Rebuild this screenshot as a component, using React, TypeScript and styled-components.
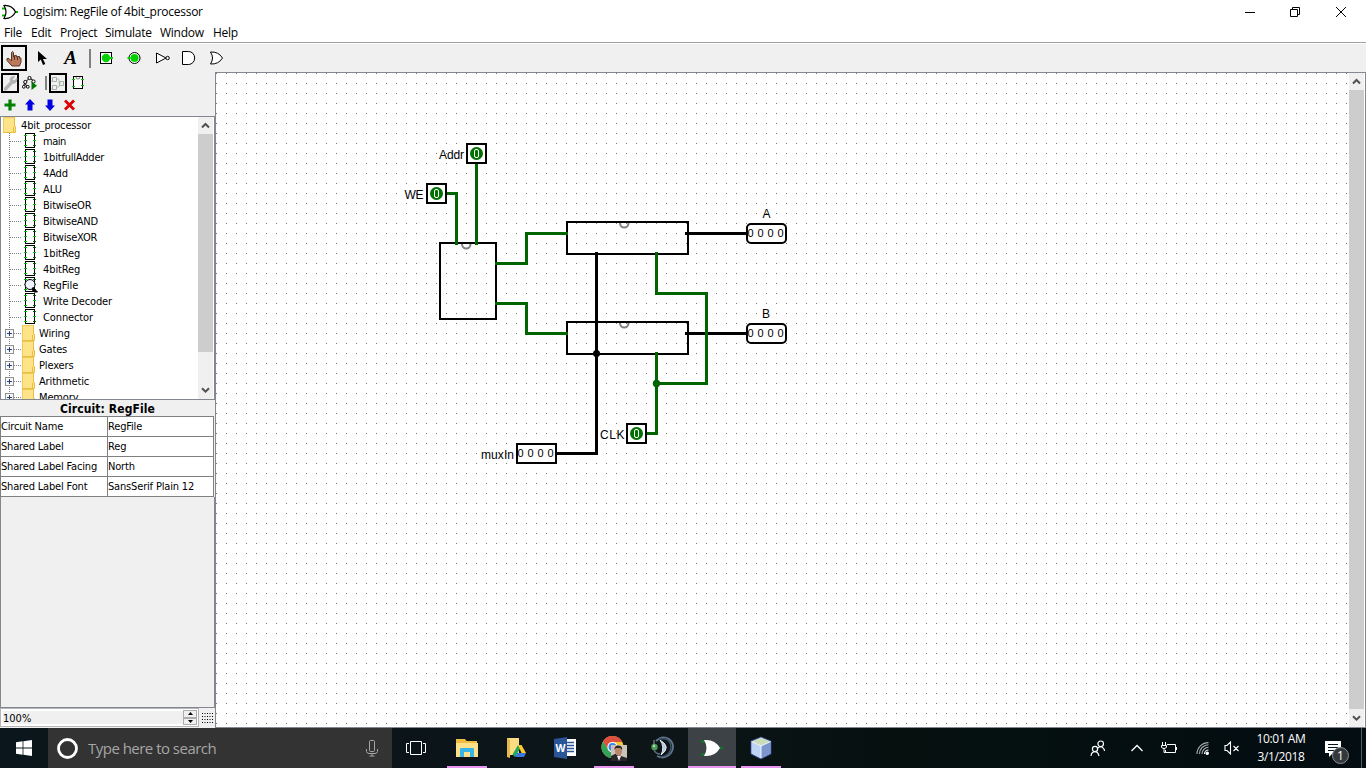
import React from "react";
import styled, { createGlobalStyle } from "styled-components";

const GlobalStyle = createGlobalStyle`
  * { box-sizing: border-box; }
  body { margin: 0; overflow: hidden; background: #fff; }
  svg { display: block; flex: none; }
`;

const ui = `"Open Sans", "Noto Sans", sans-serif`;
const tahoma = `"DejaVu Sans Condensed", "DejaVu Sans", sans-serif`;
const edge = "#828790";

const Desktop = styled.div`
  width: 1366px;
  height: 768px;
  display: flex;
  flex-direction: column;
  background: #fff;
  color: #000;
`;

const TitleBar = styled.header`
  height: 23px;
  flex: none;
  display: flex;
  align-items: center;
  padding: 0 2px;
  font: 12px/23px ${ui};
`;
const TitleText = styled.span`
  margin-left: 5px;
  flex: 1;
  letter-spacing: -0.26px;
`;
const WindowButton = styled.span<{ $w?: number }>`
  width: ${(p) => p.$w ?? 46}px;
  height: 20px;
  display: flex;
  justify-content: center;
  align-items: center;
`;

const MenuBar = styled.nav`
  height: 20px;
  flex: none;
  display: flex;
  padding-left: 4px;
  border-bottom: 1px solid #a0a0a0;
  font: 12px/20px ${ui};
  letter-spacing: -0.25px;
`;
const MenuItem = styled.span<{ $w: number }>`
  width: ${(p) => p.$w}px;
  white-space: nowrap;
`;

const ToolBar = styled.div`
  height: 29px;
  flex: none;
  display: flex;
  align-items: center;
  padding-left: 1px;
  border-top: 1px solid #fff;
  background: #f0f0f0;
`;
const Tool = styled.span<{ $w: number; $h: number; $active?: boolean; $gap?: number }>`
  width: ${(p) => p.$w}px;
  height: ${(p) => p.$h}px;
  margin-right: ${(p) => p.$gap ?? 2}px;
  border: 2px solid ${(p) => (p.$active ? "#000" : "transparent")};
  display: flex;
  align-items: center;
  justify-content: center;
  flex: none;
`;
const Divider = styled.span<{ $h: number; $left: number; $right: number }>`
  width: 2px;
  height: ${(p) => p.$h}px;
  margin: 0 ${(p) => p.$right}px 0 ${(p) => p.$left}px;
  background: #808080;
`;

const Workspace = styled.main`
  height: 656px;
  flex: none;
  display: flex;
`;
const SidePanel = styled.aside`
  width: 215px;
  display: flex;
  flex-direction: column;
  background: #f0f0f0;
  font-family: ${tahoma};
  font-size: 11px;
`;
const PanelTools = styled.div`
  height: 22px;
  display: flex;
  align-items: center;
  padding-left: 1px;
`;
const TreePane = styled.section`
  height: 284px;
  flex: none;
  display: flex;
  overflow: hidden;
  padding-right: 1px;
  border: 1px solid ${edge};
  background: #fff;
`;
const TreeList = styled.div`
  flex: 1;
  overflow: hidden;
`;
const TreeRow = styled.div<{ $indent?: number }>`
  height: 16px;
  padding-left: ${(p) => p.$indent ?? 0}px;
  display: flex;
  align-items: flex-start;
  white-space: nowrap;
`;
const TreeLabel = styled.span<{ $tracking: number }>`
  margin-left: 4px;
  line-height: 18px;
  height: 16px;
  letter-spacing: ${(p) => p.$tracking}px;
`;

const ScrollTrack = styled.div`
  width: 15px;
  flex: none;
  display: flex;
  flex-direction: column;
  background: #f0f0f0;
`;
const ScrollArrow = styled.span`
  height: 17px;
  display: flex;
  align-items: center;
  justify-content: center;
`;
const ScrollThumb = styled.span<{ $h: number }>`
  height: ${(p) => p.$h}px;
  margin-bottom: auto;
  background: #cdcdcd;
`;

const AttrTitle = styled.h2`
  margin: 0;
  height: 16px;
  flex: none;
  text-align: center;
  font: bold 12px/18px ${tahoma};
  letter-spacing: 0.1px;
`;
const AttrTable = styled.div`
  width: 214px;
  display: grid;
  grid-template-columns: 107px 106px;
  border-left: 1px solid #808080;
  border-top: 1px solid #808080;
`;
const AttrCell = styled.span`
  height: 20px;
  line-height: 20px;
  background: #fff;
  border-right: 1px solid #808080;
  border-bottom: 1px solid #808080;
  white-space: nowrap;
  letter-spacing: -0.17px;
`;
const AttrFiller = styled.div`
  flex: 1;
  border: 1px solid ${edge};
  border-top: 0;
`;
const ZoomBar = styled.div`
  height: 20px;
  flex: none;
  display: flex;
`;
const ZoomField = styled.span`
  width: 199px;
  height: 19px;
  display: flex;
  padding: 1px;
  border: 1px solid #b4b6ba;
  background: #fff;
`;
const ZoomValue = styled.span`
  flex: 1;
  margin: 1px 0 1px 1px;
  line-height: 15px;
  background: #f0f0f0;
`;
const Spinner = styled.span`
  width: 14px;
  display: grid;
  grid-template-rows: 1fr 1fr;
`;
const SpinButton = styled.span`
  display: flex;
  align-items: center;
  justify-content: center;
  background: #f0f0f0;
  border: 1px solid #adadad;
`;
const GridToggle = styled.span`
  flex: 1;
  display: flex;
  align-items: center;
  justify-content: center;
`;

const CanvasPane = styled.section`
  flex: 1;
  display: flex;
  border: 1px solid ${edge};
  background: #fff;
`;

const TaskBar = styled.footer`
  height: 40px;
  flex: none;
  display: flex;
  color: #fff;
  background: linear-gradient(90deg, #0a161b 0%, #0b1519 32%, #0d1517 50%, #05100f 66%, #030d12 100%);
`;
const StartButton = styled.span`
  width: 48px;
  display: flex;
  align-items: center;
  justify-content: center;
`;
const SearchBox = styled.div`
  width: 344px;
  display: flex;
  align-items: center;
  padding: 0 14px 0 8px;
  background: #333;
  color: #a6a6a6;
  font: 15px/40px ${ui};
`;
const SearchText = styled.span`
  flex: 1;
  margin-left: 9px;
  letter-spacing: -0.52px;
`;
const TaskButton = styled.span<{ $active?: boolean; $running?: boolean; $gap?: number }>`
  width: 48px;
  margin-right: ${(p) => p.$gap ?? 1}px;
  position: relative;
  display: flex;
  align-items: center;
  justify-content: center;
  background: ${(p) => (p.$active ? "#3c4245" : "transparent")};
  &::after {
    content: "";
    position: absolute;
    bottom: 0;
    left: ${(p) => (p.$active ? 0 : 4)}px;
    right: ${(p) => (p.$active ? 0 : 4)}px;
    height: 2px;
    background: ${(p) => (p.$running ? "#e795f0" : "transparent")};
  }
`;
const Tray = styled.div`
  margin-left: auto;
  display: flex;
  align-items: center;
`;
const TrayIcon = styled.span<{ $w: number; $gap?: number }>`
  width: ${(p) => p.$w}px;
  margin-right: ${(p) => p.$gap ?? 0}px;
  display: flex;
  justify-content: center;
`;
const Clock = styled.div`
  width: 64px;
  text-align: center;
  font: 12px/18px ${ui};
  letter-spacing: -0.4px;
  white-space: nowrap;
`;
const Notice = styled.span`
  position: relative;
  width: 37px;
  margin-left: 11px;
`;
const NoticeCount = styled.span`
  position: absolute;
  left: 8px;
  top: 7px;
  width: 17px;
  height: 17px;
  border: 1px solid #8c8f91;
  border-radius: 50%;
  background: #33383b;
  text-align: center;
  font: 12px/15px ${ui};
`;
const ShowDesktop = styled.span`
  width: 5px;
  height: 40px;
  border-left: 1px solid #555c60;
`;

const PokeIcon = () => (
  <svg width="16" height="17" viewBox="0 0 16 17">
    <path d="M5.500 9V2.500Q6.500 .5 7.500 2.500V7h1V5.500h2V7h1V6.500h2V8h1.500v4L13.500 16H6L1 10.500V8.500h2L5.500 11Z" fill="#bd7a5b" stroke="#59362a" />
    <path d="M8.500 7v3M11.500 7v3" stroke="#59362a" />
  </svg>
);
const ArrowIcon = () => (
  <svg width="11" height="16" viewBox="0 0 11 16">
    <path d="M1 1V12L3.800 9.500L6 15L8.300 14L6 9H10Z" />
  </svg>
);
const LetterA = styled.span`
  font: italic bold 19px/20px "Liberation Serif", serif;
  padding-left: 1px;
`;
const InputPinIcon = () => (
  <svg width="16" height="16" viewBox="0 0 16 16">
    <rect x="2.500" y="2.500" width="11" height="11" fill="#fff" stroke="#000" />
    <circle cx="8" cy="8" r="4.200" fill="#00d200" />
    <path d="M12 8h3" stroke="#00d200" strokeWidth="2" />
  </svg>
);
const OutputPinIcon = () => (
  <svg width="16" height="16" viewBox="0 0 16 16">
    <circle cx="8.500" cy="8" r="5.500" fill="#fff" stroke="#000" />
    <circle cx="8.500" cy="8" r="4" fill="#00d200" />
    <path d="M1.500 8h3" stroke="#00d200" strokeWidth="2" />
  </svg>
);
const NotIcon = () => (
  <svg width="16" height="16" viewBox="0 0 16 16">
    <path d="M2.500 3V13L12 8Z" fill="#fff" stroke="#000" />
    <circle cx="13.600" cy="8" r="1.700" fill="#fff" stroke="#000" />
  </svg>
);
const AndIcon = () => (
  <svg width="16" height="16" viewBox="0 0 16 16">
    <path d="M.5 1.500H6.500A6.200 6.500 0 0 1 6.500 14.500H.5Z" fill="#fff" stroke="#000" />
  </svg>
);
const OrIcon = () => (
  <svg width="16" height="16" viewBox="0 0 16 16">
    <path d="M.5 2Q8.500 1.500 12.500 8Q8.500 14.500 .5 14Q4.500 8 .5 2Z" fill="#fff" stroke="#000" />
  </svg>
);
const AppIcon = () => (
  <svg width="16" height="16" viewBox="0 0 16 16">
    <path d="M0 4.500h4M0 11.500h4M13 8h3" stroke="#00b400" strokeWidth="2" />
    <path d="M2 1.500Q10 1 13.500 8Q10 15 2 14.500Q6 8 2 1.500Z" fill="#fff" stroke="#000" strokeWidth="1.200" />
  </svg>
);
const WrenchIcon = () => (
  <svg width="15" height="16" viewBox="0 0 15 16">
    <path d="M2.500 14L9 7" stroke="#b4b4b4" strokeWidth="3.400" strokeLinecap="round" />
    <path d="M14 3.500L11 6L9.500 4.500L11.500 1.500Q7.500 1 7 4.500Q7 8.500 10.500 8.500Q14 8 14 3.500Z" fill="#b4b4b4" stroke="#b4b4b4" />
  </svg>
);
const SimTreeIcon = () => (
  <svg width="16" height="16" viewBox="0 0 16 16">
    <path d="M7.500 3L2.500 8L1.500 12M7.500 3L12 6M3 8L5 12" fill="none" stroke="#000" />
    <g fill="#fff" stroke="#000">
      <circle cx="7.500" cy="3" r="1.600" />
      <circle cx="3.300" cy="7" r="1.600" />
      <circle cx="1.800" cy="11.800" r="1.400" />
      <circle cx="5.800" cy="11.800" r="1.400" />
      <circle cx="11.500" cy="6.500" r="1.600" />
    </g>
    <path d="M9.500 6.500V15L15 10.700Z" fill="#007800" />
  </svg>
);
const LayoutIcon = () => (
  <svg width="14" height="15" viewBox="0 0 14 15" fill="none">
    <path d="M5 3h3v4h2M5 11h3V8.500M0 5h1M0 13h1" stroke="#a5d6a5" />
    <path d="M1.500 1.500h4v4h-4ZM1.500 9.500h4v4h-4ZM8.500 5.500h4v4h-4Z" stroke="#aaa" />
  </svg>
);
const AppearanceIcon = () => (
  <svg width="12" height="16" viewBox="0 0 12 16">
    <rect x="1.500" y="1.500" width="9" height="12" fill="#fff" stroke="#000" />
    <path d="M4 2a2 2 0 0 0 4 0" fill="none" stroke="#808080" />
    <path d="M0 4.500h3M0 11.500h3M9 10.500h3M9 4.500h3" stroke="#00c800" />
  </svg>
);

const RowTools = styled.span`
  display: flex;
  gap: 4px;
  padding-left: 1px;
`;
const AddIcon = () => (
  <svg width="16" height="16" viewBox="0 0 16 16">
    <path d="M8 2.500V13.500M2.500 8H13.500" stroke="#008000" strokeWidth="3.200" />
  </svg>
);
const MoveIcon = ({ down }: { down?: boolean }) => (
  <svg width="16" height="16" viewBox="0 0 16 16">
    <path d={down ? "M8 14L3 8.500H5.500V2.500H10.500V8.500H13Z" : "M8 2L3 7.500H5.500V13.500H10.500V7.500H13Z"} fill="#0000e0" />
  </svg>
);
const RemoveIcon = () => (
  <svg width="16" height="16" viewBox="0 0 16 16">
    <path d="M3 3.500L12 12.500M12 3.500L3 12.500" stroke="#dc0000" strokeWidth="2.800" />
  </svg>
);

const FolderArt = () => (
  <>
    <rect width="12" height="16" fill="#ffe389" />
    <path d="M0 .5H12M.5 0V16" stroke="#efca58" />
    <path d="M11.500 0V9.500H12.500V15.500H0M10.500 15V10" fill="none" stroke="#eabf3f" />
  </>
);
const RootFolder = () => (
  <svg width="14" height="16" viewBox="0 0 14 16">
    <FolderArt />
  </svg>
);

const CircuitBranch = ({ open }: { open?: boolean }) => (
  <svg width="38" height="16" viewBox="0 0 38 16">
    <path d="M8.500 0V16M9 8.500H20" stroke="#808080" strokeDasharray="1 1" />
    <rect x="24.500" y=".5" width="9" height="14" fill="#fff" stroke="#000" />
    <path d="M23 2.500h3M23 7.500h3M23 12.500h3M32 7.500h3" stroke="#00c800" />
    <path d="M32 2.500h3M32 12.500h3" stroke="#006400" />
    {open && (
      <>
        <circle cx="29" cy="7.500" r="5" fill="#f0f2ff" stroke="#000" />
        <path d="M32 10.500L36.500 15H33L31 12.500Z" stroke="#000" />
      </>
    )}
  </svg>
);
const LibraryBranch = () => (
  <svg width="34" height="16" viewBox="0 0 34 16">
    <path d="M8.500 0V16M13 8.500H20" stroke="#808080" strokeDasharray="1 1" />
    <rect x="4.500" y="4.500" width="8" height="8" fill="#f8f8f8" stroke="#919191" />
    <path d="M6 8.500h5M8.500 6v5" stroke="#29417b" />
    <g transform="translate(21 0)">
      <FolderArt />
    </g>
  </svg>
);

const Chevron = ({ down }: { down?: boolean }) => (
  <svg width="9" height="7" viewBox="0 0 9 7">
    <path d={down ? "M1 1.200L4.500 4.700L8 1.200" : "M1 5.500L4.500 2L8 5.500"} fill="none" stroke="#505050" strokeWidth="2" />
  </svg>
);

const Scrollbar = ({ thumb }: { thumb: number }) => (
  <ScrollTrack>
    <ScrollArrow><Chevron /></ScrollArrow>
    <ScrollThumb $h={thumb} />
    <ScrollArrow><Chevron down /></ScrollArrow>
  </ScrollTrack>
);

const circuits: [string, number][] = [
  ["main", -0.5],
  ["1bitfullAdder", -0.2],
  ["4Add", -0.15],
  ["ALU", 0],
  ["BitwiseOR", -0.2],
  ["BitwiseAND", -0.25],
  ["BitwiseXOR", -0.2],
  ["1bitReg", -0.1],
  ["4bitReg", -0.1],
  ["RegFile", 0],
  ["Write Decoder", -0.15],
  ["Connector", -0.12],
];
const libraries = ["Wiring", "Gates", "Plexers", "Arithmetic", "Memory"];
const attributes: [string, string][] = [
  ["Circuit Name", "RegFile"],
  ["Shared Label", "Reg"],
  ["Shared Label Facing", "North"],
  ["Shared Label Font", "SansSerif Plain 12"],
];

const WireLabel = styled.text`
  font: 12px "Liberation Sans", Arial, sans-serif;
`;
const Digit = styled.text`
  font: 11px "Liberation Sans", Arial, sans-serif;
  text-anchor: middle;
`;

const BitPin = ({ x, y }: { x: number; y: number }) => (
  <g>
    <rect x={x} y={y} width="19" height="19" fill="#fff" stroke="#000" strokeWidth="2" />
    <circle cx={x + 9.5} cy={y + 9.5} r="6.500" fill="#007000" />
    <rect x={x + 7.5} y={y + 5.5} width="4" height="8" rx="1.500" fill="none" stroke="#fff" />
  </g>
);
const BusPin = ({ x, y, rounded }: { x: number; y: number; rounded?: boolean }) => (
  <g>
    <rect x={x} y={y} width="39" height="19" rx={rounded ? 4 : 0} fill="#fff" stroke="#000" strokeWidth="2" />
    {[3.6, 13.6, 23.6, 33.6].map((dx) => (
      <Digit key={dx} x={x + dx} y={y + 13}>0</Digit>
    ))}
  </g>
);

const Circuit = () => (
  <svg width="1133" height="654" viewBox="216 73 1133 654">
    <defs>
      <pattern id="grid" x="6" y="3" width="10" height="10" patternUnits="userSpaceOnUse">
        <rect width="1" height="1" fill="#777" />
      </pattern>
    </defs>
    <rect x="216" y="73" width="1133" height="654" fill="url(#grid)" />
    <g fill="none" stroke="#808080" strokeWidth="2">
      <path d="M462 244a4.200 4.500 0 0 0 8.500 0" />
      <path d="M620 223a4.200 4.500 0 0 0 8.500 0" />
      <path d="M620 323a4.200 4.500 0 0 0 8.500 0" />
    </g>
    <g fill="none" stroke="#000" strokeWidth="2">
      <rect x="440" y="243" width="56" height="76" />
      <rect x="567" y="222" width="121" height="32" />
      <rect x="567" y="322" width="121" height="32" />
    </g>
    <g fill="none" stroke="#000" strokeWidth="3">
      <path d="M685 233.500H747M685 333.500H747" />
      <path d="M596.500 252V453.500H557" />
    </g>
    <g fill="none" stroke="#006400" strokeWidth="3">
      <path d="M476.500 162V245M446 193.500H456.500V245" />
      <path d="M495 263.500H526.500V233.500H568M495 303.500H526.500V333.500H568" />
      <path d="M656.500 252V293.500H706.500V383.500H656.500" />
      <path d="M656.500 352V433.500H646" />
    </g>
    <circle cx="596.500" cy="353.500" r="3.500" />
    <circle cx="656.500" cy="383.500" r="3.700" fill="#006400" />
    <BitPin x={467} y={144} />
    <BitPin x={427} y={184} />
    <BitPin x={627} y={424} />
    <BusPin x={747} y={224} rounded />
    <BusPin x={747} y={324} rounded />
    <BusPin x={517} y={444} />
    <WireLabel x="439" y="159" textLength="25">Addr</WireLabel>
    <WireLabel x="404.500" y="199" textLength="19">WE</WireLabel>
    <WireLabel x="600" y="439" textLength="24.500">CLK</WireLabel>
    <WireLabel x="481" y="459" textLength="33">muxIn</WireLabel>
    <WireLabel x="762.500" y="218">A</WireLabel>
    <WireLabel x="762" y="318">B</WireLabel>
  </svg>
);

const WindowsLogo = () => (
  <svg width="16" height="16" viewBox="0 0 16 16" fill="#fff">
    <path d="M0 2.200L6.600 1.300V7.500H0ZM7.400 1.200L16 0V7.500H7.400ZM0 8.400H6.600V14.700L0 13.800ZM7.400 8.400H16V16L7.400 14.800Z" />
  </svg>
);
const MicIcon = () => (
  <svg width="12" height="17" viewBox="0 0 12 17" fill="none" stroke="#a6a6a6">
    <rect x="3.500" y=".5" width="5" height="11" rx="1" />
    <path d="M.5 9V11.500Q1 13.500 3 13.500H9Q11 13.500 11.500 11.500V9M6 13.500V16M3.500 16H8.500" />
  </svg>
);
const TaskViewIcon = () => (
  <svg width="20" height="16" viewBox="0 0 20 16" fill="none" stroke="#fff">
    <path d="M4.500 1.500h11v13h-11ZM3 3.500H.5V12.500H3M17 3.500H19.500V12.500H17" />
  </svg>
);
const ExplorerIcon = () => (
  <svg width="22" height="20" viewBox="0 0 22 20">
    <path d="M0 1h9l1.500 2H21V19H0Z" fill="#f0bd42" />
    <path d="M0 5H22V19H0Z" fill="#fce08a" />
    <path d="M4 19V11Q4 10 5 10H17Q18 10 18 11V19H14V14H8V19Z" fill="#38b4e8" />
  </svg>
);
const DriveIcon = () => (
  <svg width="19" height="20" viewBox="0 0 19 20">
    <path d="M0 0H12V17H3L0 19Z" fill="#fbdc82" />
    <path d="M0 0L3 2V20L0 19Z" fill="#e8b84a" />
    <path d="M11 7L5.500 16.500L8 19L13.500 10Z" fill="#26a65b" />
    <path d="M11 7H14.500L19 15H14.500Z" fill="#fdc92f" />
    <path d="M8 19L10 15H19L17 19Z" fill="#3b79e0" />
  </svg>
);
const WordMark = styled.text`
  font: bold 11px ${ui};
  fill: #fff;
`;
const WordIcon = () => (
  <svg width="22" height="22" viewBox="0 0 22 22">
    <rect x="11" y="2" width="11" height="17" fill="#fff" />
    <path d="M13 5.500h7M13 8.500h7M13 11.500h7M13 14.500h7" stroke="#2a5699" strokeWidth="1.300" />
    <path d="M0 2L13 0V22L0 20Z" fill="#2a5699" />
    <WordMark x="1.500" y="15" textLength="10" lengthAdjust="spacingAndGlyphs">W</WordMark>
  </svg>
);
const ChromeIcon = () => (
  <svg width="26" height="26" viewBox="0 0 26 26">
    <circle cx="11.500" cy="12" r="11" fill="#f4c63a" />
    <path d="M2 6.500A11 11 0 0 1 21.300 7H11.500L7 14.500Z" fill="#dd4f3e" />
    <path d="M2 6.500L7.500 15L12.500 17L10.500 23A11 11 0 0 1 2 6.500Z" fill="#33a35c" />
    <circle cx="11.500" cy="12" r="5.200" fill="#fff" />
    <circle cx="11.500" cy="12" r="4" fill="#4285e8" />
    <rect x="10" y="10" width="16" height="16" fill="#cdc2b7" />
    <path d="M10 26V21L15 18.500L20 21L26 23V26Z" fill="#29252a" />
    <ellipse cx="17.500" cy="16" rx="3.500" ry="5" fill="#b8876f" />
    <path d="M13.500 15Q13 10.500 17.500 10.500Q22 11 21 15L19.500 13H15Z" fill="#302522" />
    <path d="M16 21L18 26L20 21Z" fill="#eee" />
  </svg>
);
const TeamSpeakIcon = () => (
  <svg width="24" height="24" viewBox="0 0 24 24" fill="none">
    <path d="M5 5Q11 -1 18 3Q25 9 20 17Q14 24 6 20" stroke="#60758b" strokeWidth="1.800" />
    <path d="M8 3Q20 1 20 12Q19 20 9 21" stroke="#3d5168" strokeWidth="1.500" />
    <path d="M9 4Q21 11 10 19Q14 11 9 4Z" fill="#b9cbdc" stroke="#dbe6ee" />
    <path d="M3 9V4M3 14Q5 18 9 18" stroke="#607080" strokeWidth="1.500" />
    <circle cx="3.500" cy="11" r="3.200" fill="#4c9a58" />
    <circle cx="3" cy="10" r="1.200" fill="#a9dda9" />
  </svg>
);
const GateTaskIcon = () => (
  <svg width="24" height="18" viewBox="0 0 24 18">
    <path d="M1 2.500H6M1 15.500H6M19 9H23" stroke="#008c20" strokeWidth="1.500" />
    <path d="M4 1Q15 0 20 9Q15 18 4 17Q9 9 4 1Z" fill="#fff" />
  </svg>
);
const CubeIcon = () => (
  <svg width="22" height="24" viewBox="0 0 22 24">
    <path d="M1 5L11 1L21 5V18L11 23L1 18Z" fill="#9fb8e5" stroke="#293f83" />
    <path d="M1.500 5.500L11 1.500L20.500 5.500L11 10Z" fill="#cbdcb9" />
    <path d="M1.500 6L11 10V22.500L1.500 17.500Z" fill="#bdd4f5" />
    <path d="M11 10L20.500 6V17.500L11 22.500Z" fill="#7d95cd" />
    <path d="M1.500 5.500L11 10L20.500 5.500M11 10V22" fill="none" stroke="#eef5ff" />
  </svg>
);

const PeopleIcon = () => (
  <svg width="16" height="17" viewBox="0 0 16 17" fill="none" stroke="#fff" strokeWidth="1.200">
    <circle cx="10.700" cy="3.800" r="2.800" />
    <path d="M8 8Q11 5.500 13 8Q14.500 9 14.500 11" />
    <circle cx="5" cy="9" r="2.600" />
    <path d="M1 16Q1.500 11.700 5 11.700Q8 11.700 9 16" />
  </svg>
);
const UpIcon = () => (
  <svg width="14" height="8" viewBox="0 0 14 8">
    <path d="M1.500 7L7 1.500L12.500 7" fill="none" stroke="#fff" strokeWidth="1.300" />
  </svg>
);
const BatteryIcon = () => (
  <svg width="16" height="12" viewBox="0 0 16 12" fill="none" stroke="#fff">
    <path d="M6 2.500H14.500V10.500H4.500V8M15.500 5V8" />
    <path d="M1.500 0V3M4.500 0V3M.5 3.500H5.500V5Q5 6.500 3 6.500Q1 6.500 .5 5ZM3 6.500V10.500H4.500" />
  </svg>
);
const WifiIcon = () => (
  <svg width="13" height="13" viewBox="0 0 13 13" fill="none" stroke="#fff" strokeWidth="1.100">
    <path d="M8.500 12A4 4 0 0 1 12.500 8" />
    <path d="M6 12A6.500 6.500 0 0 1 12.500 5.300M3.500 12A9 9 0 0 1 12.500 2.800M1 12A11.500 11.500 0 0 1 12.500 .6" stroke="#a7adb0" />
    <circle cx="11.200" cy="11.200" r="1.200" fill="#fff" />
  </svg>
);
const VolumeIcon = () => (
  <svg width="16" height="14" viewBox="0 0 16 14" fill="none" stroke="#fff" strokeWidth="1.100">
    <path d="M1 4.500H3L6.500 1V13L3 9.500H1ZM9.500 5L14.500 10M14.500 5L9.500 10" />
  </svg>
);
const MessageIcon = () => (
  <svg width="18" height="17" viewBox="0 0 18 17">
    <path d="M1 1H17V13H9L5 17V13H1Z" fill="#fff" />
    <path d="M4 4.500H14M4 7.500H14M4 10.500H11" stroke="#08141a" />
  </svg>
);

export default function App() {
  return (
    <Desktop>
      <GlobalStyle />
      <TitleBar>
        <AppIcon />
        <TitleText>Logisim: RegFile of 4bit_processor</TitleText>
        <WindowButton $w={44}>
          <svg width="10" height="10"><path d="M0 5.500H10" stroke="#000" /></svg>
        </WindowButton>
        <WindowButton>
          <svg width="10" height="10" fill="none" stroke="#000"><path d="M.5 2.500H7.500V9.500H.5ZM2.500 2V.5H9.500V7.500H8" /></svg>
        </WindowButton>
        <WindowButton>
          <svg width="10" height="10" stroke="#000"><path d="M0 0L10 10M10 0L0 10" /></svg>
        </WindowButton>
      </TitleBar>
      <MenuBar>
        <MenuItem $w={27}>File</MenuItem>
        <MenuItem $w={29}>Edit</MenuItem>
        <MenuItem $w={45}>Project</MenuItem>
        <MenuItem $w={55}>Simulate</MenuItem>
        <MenuItem $w={53}>Window</MenuItem>
        <MenuItem $w={30}>Help</MenuItem>
      </MenuBar>
      <ToolBar>
        <Tool $w={26} $h={26} $active><PokeIcon /></Tool>
        <Tool $w={26} $h={26}><ArrowIcon /></Tool>
        <Tool $w={26} $h={26}><LetterA>A</LetterA></Tool>
        <Divider $h={19} $left={4} $right={2} />
        <Tool $w={26} $h={26}><InputPinIcon /></Tool>
        <Tool $w={26} $h={26}><OutputPinIcon /></Tool>
        <Tool $w={26} $h={26}><NotIcon /></Tool>
        <Tool $w={26} $h={26}><AndIcon /></Tool>
        <Tool $w={26} $h={26}><OrIcon /></Tool>
      </ToolBar>
      <Workspace>
        <SidePanel>
          <PanelTools>
            <Tool $w={18} $h={20} $active><WrenchIcon /></Tool>
            <Tool $w={18} $h={20} $gap={0}><SimTreeIcon /></Tool>
            <Divider $h={14} $left={6} $right={2} />
            <Tool $w={18} $h={20} $active><LayoutIcon /></Tool>
            <Tool $w={18} $h={20}><AppearanceIcon /></Tool>
          </PanelTools>
          <PanelTools>
            <RowTools>
              <AddIcon />
              <MoveIcon />
              <MoveIcon down />
              <RemoveIcon />
            </RowTools>
          </PanelTools>
          <TreePane>
            <TreeList>
              <TreeRow $indent={2}>
                <RootFolder />
                <TreeLabel $tracking={-0.15}>4bit_processor</TreeLabel>
              </TreeRow>
              {circuits.map(([name, tracking]) => (
                <TreeRow key={name}>
                  <CircuitBranch open={name === "RegFile"} />
                  <TreeLabel $tracking={tracking}>{name}</TreeLabel>
                </TreeRow>
              ))}
              {libraries.map((name) => (
                <TreeRow key={name}>
                  <LibraryBranch />
                  <TreeLabel $tracking={-0.15}>{name}</TreeLabel>
                </TreeRow>
              ))}
            </TreeList>
            <Scrollbar thumb={218} />
          </TreePane>
          <AttrTitle>Circuit: RegFile</AttrTitle>
          <AttrTable>
            {attributes.map(([name, value]) => (
              <React.Fragment key={name}>
                <AttrCell>{name}</AttrCell>
                <AttrCell>{value}</AttrCell>
              </React.Fragment>
            ))}
          </AttrTable>
          <AttrFiller />
          <ZoomBar>
            <ZoomField>
              <ZoomValue>100%</ZoomValue>
              <Spinner>
                <SpinButton><svg width="5" height="3"><path d="M0 3L2.500 0L5 3Z" /></svg></SpinButton>
                <SpinButton><svg width="5" height="3"><path d="M0 0L2.500 3L5 0Z" /></svg></SpinButton>
              </Spinner>
            </ZoomField>
            <GridToggle>
              <svg width="11" height="11">
                {[0.5, 3.5, 6.5, 9.5].map((y) => (
                  <path key={y} d={`M0 ${y}H11`} stroke="#000" strokeDasharray="1 1.500" />
                ))}
              </svg>
            </GridToggle>
          </ZoomBar>
        </SidePanel>
        <CanvasPane>
          <Circuit />
          <Scrollbar thumb={619} />
        </CanvasPane>
      </Workspace>
      <TaskBar>
        <StartButton><WindowsLogo /></StartButton>
        <SearchBox>
          <svg width="23" height="23"><circle cx="11.500" cy="11.500" r="9" fill="none" stroke="#fff" strokeWidth="2.800" /></svg>
          <SearchText>Type here to search</SearchText>
          <MicIcon />
        </SearchBox>
        <TaskButton $gap={3}><TaskViewIcon /></TaskButton>
        <TaskButton $running><ExplorerIcon /></TaskButton>
        <TaskButton><DriveIcon /></TaskButton>
        <TaskButton><WordIcon /></TaskButton>
        <TaskButton $running><ChromeIcon /></TaskButton>
        <TaskButton><TeamSpeakIcon /></TaskButton>
        <TaskButton $active $running><GateTaskIcon /></TaskButton>
        <TaskButton $running><CubeIcon /></TaskButton>
        <Tray>
          <TrayIcon $w={46}><PeopleIcon /></TrayIcon>
          <TrayIcon $w={32}><UpIcon /></TrayIcon>
          <TrayIcon $w={32}><BatteryIcon /></TrayIcon>
          <TrayIcon $w={34}><WifiIcon /></TrayIcon>
          <TrayIcon $w={26} $gap={4}><VolumeIcon /></TrayIcon>
          <Clock>10:01 AM<br />3/1/2018</Clock>
          <Notice>
            <MessageIcon />
            <NoticeCount>1</NoticeCount>
          </Notice>
          <ShowDesktop />
        </Tray>
      </TaskBar>
    </Desktop>
  );
}
